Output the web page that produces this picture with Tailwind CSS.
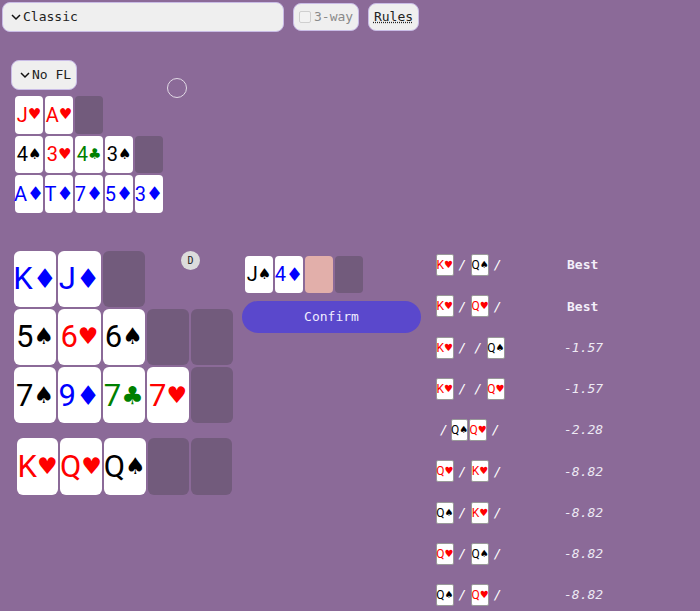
<!DOCTYPE html>
<html lang="en">
<head>
    <meta charset="UTF-8">
    <meta name="viewport" content="width=device-width, initial-scale=1.0">
    <title>Pineapple Solver</title>
    <script src="https://cdn.jsdelivr.net/npm/@tailwindcss/browser@4"></script>
</head>
<body class="relative h-[611px] overflow-hidden bg-[#8b6a98] font-['DejaVu_Sans_Mono',monospace] text-[13px]">

    <!-- top controls -->
    <div class="flex items-center pl-[2px] pt-[2px]">
        <div class="flex h-[30px] w-[282px] items-center rounded-lg border border-[#c9bce6] bg-[#efefef] pl-[8px] text-[#222]">
            <svg class="mr-[2px] h-[10px] w-[10px]" viewBox="0 0 10 10" fill="none" stroke="#111" stroke-width="1.5"><path d="M1 3l4 4 4-4"/></svg>
            <span>Classic</span>
        </div>
        <div class="ml-[9px] flex h-[28px] w-[66px] items-center rounded-lg border border-[#c9bce6] bg-[#efefef] pl-[5px] text-[#8a8a8a]">
            <span class="mr-[3px] h-[12px] w-[12px] rounded-[2px] border border-[#cfcfcf] bg-[#f2f2f2]"></span>
            <span>3-way</span>
        </div>
        <div class="ml-[9px] flex h-[28px] w-[51px] items-center justify-center rounded-lg border border-[#c9bce6] bg-[#efefef] text-[#222]">
            <span class="underline decoration-dotted">Rules</span>
        </div>
    </div>

    <!-- opponent area -->
    <div class="ml-[11px] mt-[28px] flex h-[30px] w-[66px] items-center rounded-lg border border-[#c9bce6] bg-[#efefef] pl-[8px] text-[#222]">
        <svg class="mr-[2px] h-[10px] w-[10px]" viewBox="0 0 10 10" fill="none" stroke="#111" stroke-width="1.5"><path d="M1 3l4 4 4-4"/></svg>
        <span>No FL</span>
    </div>
    <div class="absolute left-[167px] top-[78px] h-[20px] w-[20px] rounded-full border border-[#e2dae6]"></div>

    <div class="ml-[15px] mt-[6px] flex flex-col gap-[2px] font-['Liberation_Sans_Narrow','Roboto',sans-serif] text-[20px] leading-none">
        <div class="flex gap-[2px]">
            <div class="flex h-[37.5px] w-[28px] items-center justify-center rounded-[4px] bg-white text-[#f00]">J<span class="font-['DejaVu_Sans'] text-[15px]">♥</span></div>
            <div class="flex h-[37.5px] w-[28px] items-center justify-center rounded-[4px] bg-white text-[#f00]">A<span class="font-['DejaVu_Sans'] text-[15px]">♥</span></div>
            <div class="h-[37.5px] w-[28px] rounded-[4px] bg-[#725b7c]"></div>
        </div>
        <div class="flex gap-[2px]">
            <div class="flex h-[37.5px] w-[28px] items-center justify-center rounded-[4px] bg-white text-black">4<span class="font-['DejaVu_Sans'] text-[15px]">♠</span></div>
            <div class="flex h-[37.5px] w-[28px] items-center justify-center rounded-[4px] bg-white text-[#f00]">3<span class="font-['DejaVu_Sans'] text-[15px]">♥</span></div>
            <div class="flex h-[37.5px] w-[28px] items-center justify-center rounded-[4px] bg-white text-[#008000]">4<span class="font-['DejaVu_Sans'] text-[15px]">♣</span></div>
            <div class="flex h-[37.5px] w-[28px] items-center justify-center rounded-[4px] bg-white text-black">3<span class="font-['DejaVu_Sans'] text-[15px]">♠</span></div>
            <div class="h-[37.5px] w-[28px] rounded-[4px] bg-[#725b7c]"></div>
        </div>
        <div class="flex gap-[2px]">
            <div class="flex h-[37.5px] w-[28px] items-center justify-center rounded-[4px] bg-white text-[#00f]">A<span class="font-['DejaVu_Sans'] text-[19px]">♦</span></div>
            <div class="flex h-[37.5px] w-[28px] items-center justify-center rounded-[4px] bg-white text-[#00f]">T<span class="font-['DejaVu_Sans'] text-[19px]">♦</span></div>
            <div class="flex h-[37.5px] w-[28px] items-center justify-center rounded-[4px] bg-white text-[#00f]">7<span class="font-['DejaVu_Sans'] text-[19px]">♦</span></div>
            <div class="flex h-[37.5px] w-[28px] items-center justify-center rounded-[4px] bg-white text-[#00f]">5<span class="font-['DejaVu_Sans'] text-[19px]">♦</span></div>
            <div class="flex h-[37.5px] w-[28px] items-center justify-center rounded-[4px] bg-white text-[#00f]">3<span class="font-['DejaVu_Sans'] text-[19px]">♦</span></div>
        </div>
    </div>

    <div class="absolute left-[181px] top-[251px] flex h-[19px] w-[19px] items-center justify-center rounded-full bg-[#dcdcdc] text-[10px] text-[#222]">D</div>

    <div class="mt-[38px] flex">
        <!-- hero board -->
        <div class="w-[242px] font-['Liberation_Sans_Narrow','Roboto',sans-serif] text-[31px] leading-none">
            <div class="ml-[14px] flex flex-col gap-[2px]">
                <div class="flex gap-[2px]">
                    <div class="flex h-[56.3px] w-[42.3px] items-center justify-center rounded-[6px] bg-white text-[#00f]">K<span class="font-['DejaVu_Sans'] text-[27px]">♦</span></div>
                    <div class="flex h-[56.3px] w-[42.3px] items-center justify-center rounded-[6px] bg-white text-[#00f]">J<span class="font-['DejaVu_Sans'] text-[27px]">♦</span></div>
                    <div class="h-[56.3px] w-[42.3px] rounded-[6px] bg-[#725b7c]"></div>
                </div>
                <div class="flex gap-[2px]">
                    <div class="flex h-[56.3px] w-[42.3px] items-center justify-center rounded-[6px] bg-white text-black">5<span class="font-['DejaVu_Sans'] text-[23px]">♠</span></div>
                    <div class="flex h-[56.3px] w-[42.3px] items-center justify-center rounded-[6px] bg-white text-[#f00]">6<span class="font-['DejaVu_Sans'] text-[23px]">♥</span></div>
                    <div class="flex h-[56.3px] w-[42.3px] items-center justify-center rounded-[6px] bg-white text-black">6<span class="font-['DejaVu_Sans'] text-[23px]">♠</span></div>
                    <div class="h-[56.3px] w-[42.3px] rounded-[6px] bg-[#725b7c]"></div>
                    <div class="h-[56.3px] w-[42.3px] rounded-[6px] bg-[#725b7c]"></div>
                </div>
                <div class="flex gap-[2px]">
                    <div class="flex h-[56.3px] w-[42.3px] items-center justify-center rounded-[6px] bg-white text-black">7<span class="font-['DejaVu_Sans'] text-[23px]">♠</span></div>
                    <div class="flex h-[56.3px] w-[42.3px] items-center justify-center rounded-[6px] bg-white text-[#00f]">9<span class="font-['DejaVu_Sans'] text-[27px]">♦</span></div>
                    <div class="flex h-[56.3px] w-[42.3px] items-center justify-center rounded-[6px] bg-white text-[#008000]">7<span class="font-['DejaVu_Sans'] text-[25px]">♣</span></div>
                    <div class="flex h-[56.3px] w-[42.3px] items-center justify-center rounded-[6px] bg-white text-[#f00]">7<span class="font-['DejaVu_Sans'] text-[23px]">♥</span></div>
                    <div class="h-[56.3px] w-[42.3px] rounded-[6px] bg-[#725b7c]"></div>
                </div>
            </div>
            <div class="ml-[17px] mt-[15px] flex gap-[2px]">
                <div class="flex h-[56.3px] w-[41.3px] items-center justify-center rounded-[6px] bg-white text-[#f00]">K<span class="font-['DejaVu_Sans'] text-[23px]">♥</span></div>
                <div class="flex h-[56.3px] w-[41.3px] items-center justify-center rounded-[6px] bg-white text-[#f00]">Q<span class="font-['DejaVu_Sans'] text-[23px]">♥</span></div>
                <div class="flex h-[56.3px] w-[42.3px] items-center justify-center rounded-[6px] bg-white text-black">Q<span class="font-['DejaVu_Sans'] text-[23px]">♠</span></div>
                <div class="h-[56.3px] w-[41.3px] rounded-[6px] bg-[#725b7c]"></div>
                <div class="h-[56.3px] w-[41.3px] rounded-[6px] bg-[#725b7c]"></div>
            </div>
        </div>

        <!-- draw and confirm -->
        <div class="w-[179px]">
            <div class="ml-[3px] mt-[5px] flex gap-[2px] font-['Liberation_Sans_Narrow','Roboto',sans-serif] text-[20px] leading-none">
                <div class="flex h-[37.5px] w-[28px] items-center justify-center rounded-[4px] bg-white text-black">J<span class="font-['DejaVu_Sans'] text-[15px]">♠</span></div>
                <div class="flex h-[37.5px] w-[28px] items-center justify-center rounded-[4px] bg-white text-[#00f]">4<span class="font-['DejaVu_Sans'] text-[19px]">♦</span></div>
                <div class="h-[37.5px] w-[28px] rounded-[4px] bg-[#e2afaa]"></div>
                <div class="h-[37.5px] w-[28px] rounded-[4px] bg-[#725b7c]"></div>
            </div>
            <div class="mt-[8px] flex h-[32px] items-center justify-center rounded-full bg-[#5a48cc] text-[#f0edff]">Confirm</div>
        </div>

        <!-- solver results -->
        <div class="ml-[15px] -mt-[6px] flex flex-col text-white">
            <div class="flex h-[41.25px] items-center"><div class="flex w-[131px] items-center gap-[5px] italic"><div class="flex h-[22px] w-[17.5px] items-center justify-center rounded-[2px] border border-[#999] bg-white font-['Liberation_Sans_Narrow','Roboto',sans-serif] text-[12px] not-italic leading-none text-[#f00]">K<span class="font-['DejaVu_Sans'] text-[10px]">♥</span></div>/<div class="flex h-[22px] w-[17.5px] items-center justify-center rounded-[2px] border border-[#999] bg-white font-['Liberation_Sans_Narrow','Roboto',sans-serif] text-[12px] not-italic leading-none text-black">Q<span class="font-['DejaVu_Sans'] text-[10px]">♠</span></div>/</div><b class="text-[#f3effa]">Best</b></div>
            <div class="flex h-[41.25px] items-center"><div class="flex w-[131px] items-center gap-[5px] italic"><div class="flex h-[22px] w-[17.5px] items-center justify-center rounded-[2px] border border-[#999] bg-white font-['Liberation_Sans_Narrow','Roboto',sans-serif] text-[12px] not-italic leading-none text-[#f00]">K<span class="font-['DejaVu_Sans'] text-[10px]">♥</span></div>/<div class="flex h-[22px] w-[17.5px] items-center justify-center rounded-[2px] border border-[#999] bg-white font-['Liberation_Sans_Narrow','Roboto',sans-serif] text-[12px] not-italic leading-none text-[#f00]">Q<span class="font-['DejaVu_Sans'] text-[10px]">♥</span></div>/</div><b class="text-[#f3effa]">Best</b></div>
            <div class="flex h-[41.25px] items-center"><div class="flex w-[131px] items-center gap-[5px] italic"><div class="flex h-[22px] w-[17.5px] items-center justify-center rounded-[2px] border border-[#999] bg-white font-['Liberation_Sans_Narrow','Roboto',sans-serif] text-[12px] not-italic leading-none text-[#f00]">K<span class="font-['DejaVu_Sans'] text-[10px]">♥</span></div>/<span class="ml-[3px]">/</span><div class="flex h-[22px] w-[17.5px] items-center justify-center rounded-[2px] border border-[#999] bg-white font-['Liberation_Sans_Narrow','Roboto',sans-serif] text-[12px] not-italic leading-none text-black">Q<span class="font-['DejaVu_Sans'] text-[10px]">♠</span></div></div><i class="-ml-[3px] text-[#eeeaf5]">-1.57</i></div>
            <div class="flex h-[41.25px] items-center"><div class="flex w-[131px] items-center gap-[5px] italic"><div class="flex h-[22px] w-[17.5px] items-center justify-center rounded-[2px] border border-[#999] bg-white font-['Liberation_Sans_Narrow','Roboto',sans-serif] text-[12px] not-italic leading-none text-[#f00]">K<span class="font-['DejaVu_Sans'] text-[10px]">♥</span></div>/<span class="ml-[3px]">/</span><div class="flex h-[22px] w-[17.5px] items-center justify-center rounded-[2px] border border-[#999] bg-white font-['Liberation_Sans_Narrow','Roboto',sans-serif] text-[12px] not-italic leading-none text-[#f00]">Q<span class="font-['DejaVu_Sans'] text-[10px]">♥</span></div></div><i class="-ml-[3px] text-[#eeeaf5]">-1.57</i></div>
            <div class="flex h-[41.25px] items-center"><div class="flex w-[131px] items-center italic"><span class="ml-[4px] mr-[3px]">/</span><div class="flex h-[22px] w-[17.5px] items-center justify-center rounded-[2px] border border-[#999] bg-white font-['Liberation_Sans_Narrow','Roboto',sans-serif] text-[12px] not-italic leading-none text-black">Q<span class="font-['DejaVu_Sans'] text-[10px]">♠</span></div><div class="ml-[1px] flex h-[22px] w-[17.5px] items-center justify-center rounded-[2px] border border-[#999] bg-white font-['Liberation_Sans_Narrow','Roboto',sans-serif] text-[12px] not-italic leading-none text-[#f00]">Q<span class="font-['DejaVu_Sans'] text-[10px]">♥</span></div><span class="ml-[5px]">/</span></div><i class="-ml-[3px] text-[#eeeaf5]">-2.28</i></div>
            <div class="flex h-[41.25px] items-center"><div class="flex w-[131px] items-center gap-[5px] italic"><div class="flex h-[22px] w-[17.5px] items-center justify-center rounded-[2px] border border-[#999] bg-white font-['Liberation_Sans_Narrow','Roboto',sans-serif] text-[12px] not-italic leading-none text-[#f00]">Q<span class="font-['DejaVu_Sans'] text-[10px]">♥</span></div>/<div class="flex h-[22px] w-[17.5px] items-center justify-center rounded-[2px] border border-[#999] bg-white font-['Liberation_Sans_Narrow','Roboto',sans-serif] text-[12px] not-italic leading-none text-[#f00]">K<span class="font-['DejaVu_Sans'] text-[10px]">♥</span></div>/</div><i class="-ml-[3px] text-[#eeeaf5]">-8.82</i></div>
            <div class="flex h-[41.25px] items-center"><div class="flex w-[131px] items-center gap-[5px] italic"><div class="flex h-[22px] w-[17.5px] items-center justify-center rounded-[2px] border border-[#999] bg-white font-['Liberation_Sans_Narrow','Roboto',sans-serif] text-[12px] not-italic leading-none text-black">Q<span class="font-['DejaVu_Sans'] text-[10px]">♠</span></div>/<div class="flex h-[22px] w-[17.5px] items-center justify-center rounded-[2px] border border-[#999] bg-white font-['Liberation_Sans_Narrow','Roboto',sans-serif] text-[12px] not-italic leading-none text-[#f00]">K<span class="font-['DejaVu_Sans'] text-[10px]">♥</span></div>/</div><i class="-ml-[3px] text-[#eeeaf5]">-8.82</i></div>
            <div class="flex h-[41.25px] items-center"><div class="flex w-[131px] items-center gap-[5px] italic"><div class="flex h-[22px] w-[17.5px] items-center justify-center rounded-[2px] border border-[#999] bg-white font-['Liberation_Sans_Narrow','Roboto',sans-serif] text-[12px] not-italic leading-none text-[#f00]">Q<span class="font-['DejaVu_Sans'] text-[10px]">♥</span></div>/<div class="flex h-[22px] w-[17.5px] items-center justify-center rounded-[2px] border border-[#999] bg-white font-['Liberation_Sans_Narrow','Roboto',sans-serif] text-[12px] not-italic leading-none text-black">Q<span class="font-['DejaVu_Sans'] text-[10px]">♠</span></div>/</div><i class="-ml-[3px] text-[#eeeaf5]">-8.82</i></div>
            <div class="flex h-[41.25px] items-center"><div class="flex w-[131px] items-center gap-[5px] italic"><div class="flex h-[22px] w-[17.5px] items-center justify-center rounded-[2px] border border-[#999] bg-white font-['Liberation_Sans_Narrow','Roboto',sans-serif] text-[12px] not-italic leading-none text-black">Q<span class="font-['DejaVu_Sans'] text-[10px]">♠</span></div>/<div class="flex h-[22px] w-[17.5px] items-center justify-center rounded-[2px] border border-[#999] bg-white font-['Liberation_Sans_Narrow','Roboto',sans-serif] text-[12px] not-italic leading-none text-[#f00]">Q<span class="font-['DejaVu_Sans'] text-[10px]">♥</span></div>/</div><i class="-ml-[3px] text-[#eeeaf5]">-8.82</i></div>
        </div>
    </div>
</body>
</html>
